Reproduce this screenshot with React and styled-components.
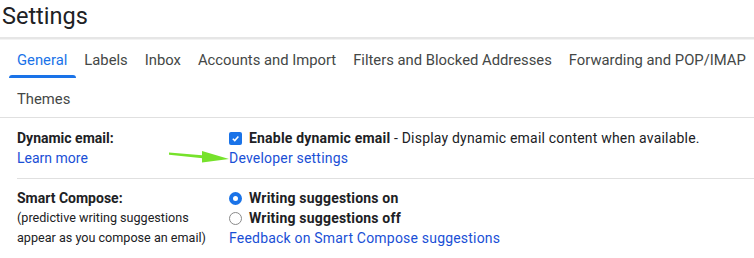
import React from 'react';
import styled, { createGlobalStyle } from 'styled-components';

const GlobalStyle = createGlobalStyle`
  body {
    margin: 0;
    background: #fff;
    font-family: Roboto, "Liberation Sans", Arial, sans-serif;
    color: #202124;
  }
`;

const Page = styled.div`
  width: 754px;
  height: 258px;
  overflow: hidden;
  background: #fff;
`;

const TitleBar = styled.div`
  height: 37px;
  display: flex;
  align-items: center;
  padding-left: 2px;
  border-bottom: 2px solid #e6e6e6;
  box-shadow: 0 1px 0 #f3f3f3;
`;

const Title = styled.h1`
  margin: 0;
  font-family: Roboto, "Open Sans", sans-serif;
  font-weight: 400;
  font-size: 23.5px;
  color: #202124;
  position: relative;
  top: -3px;
`;

const TabBar = styled.div`
  border-bottom: 1px solid #e0e0e0;
`;

const TabRow = styled.div`
  display: flex;
  padding-left: 9px;
  white-space: nowrap;
  overflow: hidden;
`;

const Tab = styled.div`
  box-sizing: border-box;
  height: 39px;
  padding: 2px 9px 0 8px;
  display: flex;
  align-items: center;
  flex-shrink: 0;
  font-size: 14.8px;
  color: ${(p) => (p.active ? '#1a73e8' : '#444746')};
  position: relative;

  &::after {
    content: '';
    display: ${(p) => (p.active ? 'block' : 'none')};
    position: absolute;
    left: 0;
    right: 0;
    bottom: 0;
    height: 3px;
    border-radius: 3px 3px 0 0;
    background: #1a73e8;
  }
`;

const Rows = styled.div`
  margin-left: 17px;
  padding-top: 1px;
`;

const Row = styled.div`
  display: grid;
  grid-template-columns: 212px 1fr;
  padding: 9px 0 10px;
  border-top: ${(p) => (p.divided ? '1px solid #e0e0e0' : 'none')};
  font-size: 14px;
  line-height: 20px;
`;

const Label = styled.div`
  display: flex;
  flex-direction: column;
`;

const LabelTitle = styled.span`
  font-weight: 700;
  color: #202124;
`;

const Note = styled.span`
  font-size: 12.6px;
  color: #202124;
`;

const Value = styled.div`
  display: flex;
  flex-direction: column;
  position: relative;
  letter-spacing: 0.2px;
`;

const Option = styled.div`
  display: flex;
  align-items: center;
  gap: 7px;
  white-space: nowrap;
`;

const Strong = styled.b`
  font-weight: 700;
`;

const LinkText = styled.a`
  color: #1a4fd6;
  text-decoration: none;
  cursor: pointer;
`;

const Check = styled.span`
  width: 13px;
  height: 13px;
  border-radius: 2px;
  background: #1a73e8;
  display: inline-flex;
  align-items: center;
  justify-content: center;
`;

const Radio = styled.span`
  width: 13px;
  height: 13px;
  box-sizing: border-box;
  border-radius: 50%;
  border: ${(p) => (p.on ? '4px solid #1a73e8' : '1px solid #8a8a8a')};
  background: #fff;
  display: inline-block;
`;

const Arrow = styled.svg`
  position: absolute;
  left: -61px;
  top: 21px;
`;

const tabRows = [
  [
    'General',
    'Labels',
    'Inbox',
    'Accounts and Import',
    'Filters and Blocked Addresses',
    'Forwarding and POP/IMAP',
  ],
  ['Themes'],
];

export default function App() {
  return (
    <Page>
      <GlobalStyle />
      <TitleBar>
        <Title>Settings</Title>
      </TitleBar>
      <TabBar>
        {tabRows.map((row, r) => (
          <TabRow key={r}>
            {row.map((t) => (
              <Tab key={t} active={t === 'General'}>
                {t}
              </Tab>
            ))}
          </TabRow>
        ))}
      </TabBar>
      <Rows>
        <Row>
          <Label>
            <LabelTitle>Dynamic email:</LabelTitle>
            <LinkText>Learn more</LinkText>
          </Label>
          <Value>
            <Option>
              <Check>
                <svg width="9" height="9" viewBox="0 0 10 10">
                  <path d="M2 5.2 L4.2 7.3 L8.2 2.8" fill="none" stroke="#fff" strokeWidth="1.7" />
                </svg>
              </Check>
              <span>
                <Strong>Enable dynamic email</Strong> - Display dynamic email content when available.
              </span>
            </Option>
            <LinkText>Developer settings</LinkText>
            <Arrow width="62" height="16" viewBox="0 0 62 16">
              <path d="M1 3.6 L37 6.4 L37 9.4 L1 5.8 Z" fill="#76e22b" />
              <path d="M34 2 L61 10 L34 13.5 Z" fill="#76e22b" />
            </Arrow>
          </Value>
        </Row>
        <Row divided>
          <Label>
            <LabelTitle>Smart Compose:</LabelTitle>
            <Note>(predictive writing suggestions</Note>
            <Note>appear as you compose an email)</Note>
          </Label>
          <Value>
            <Option>
              <Radio on />
              <Strong>Writing suggestions on</Strong>
            </Option>
            <Option>
              <Radio />
              <Strong>Writing suggestions off</Strong>
            </Option>
            <LinkText>Feedback on Smart Compose suggestions</LinkText>
          </Value>
        </Row>
      </Rows>
    </Page>
  );
}
